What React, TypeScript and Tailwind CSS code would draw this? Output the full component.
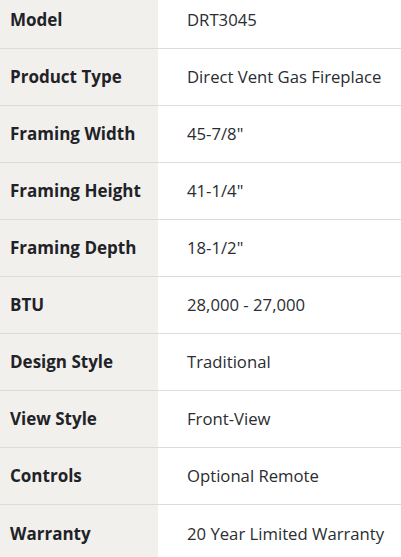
const specs = [
  { label: "Model", value: "DRT3045" },
  { label: "Product Type", value: "Direct Vent Gas Fireplace" },
  { label: "Framing Width", value: '45-7/8"' },
  { label: "Framing Height", value: '41-1/4"' },
  { label: "Framing Depth", value: '18-1/2"' },
  { label: "BTU", value: "28,000 - 27,000" },
  { label: "Design Style", value: "Traditional" },
  { label: "View Style", value: "Front-View" },
  { label: "Controls", value: "Optional Remote" },
  { label: "Warranty", value: "20 Year Limited Warranty" },
];

export default function App() {
  return (
    <div className="h-[557px] w-[401px] overflow-hidden bg-white font-['Open_Sans',sans-serif] text-[#1f2328]">
      <div className="-mt-[8px]">
        {specs.map((row, i) => (
          <div
            key={i}
            className={`flex h-[57px] ${i < specs.length - 1 ? "border-b border-[#dcdcdc]" : ""}`}
          >
            <div className="flex w-[158px] shrink-0 items-center bg-[#f1f0ed] pl-[10px] text-[17px] font-bold">
              {row.label}
            </div>
            <div className="flex items-center whitespace-nowrap pl-[29px] text-[16.7px] text-[#2a2d31]">
              {row.value}
            </div>
          </div>
        ))}
      </div>
    </div>
  );
}
